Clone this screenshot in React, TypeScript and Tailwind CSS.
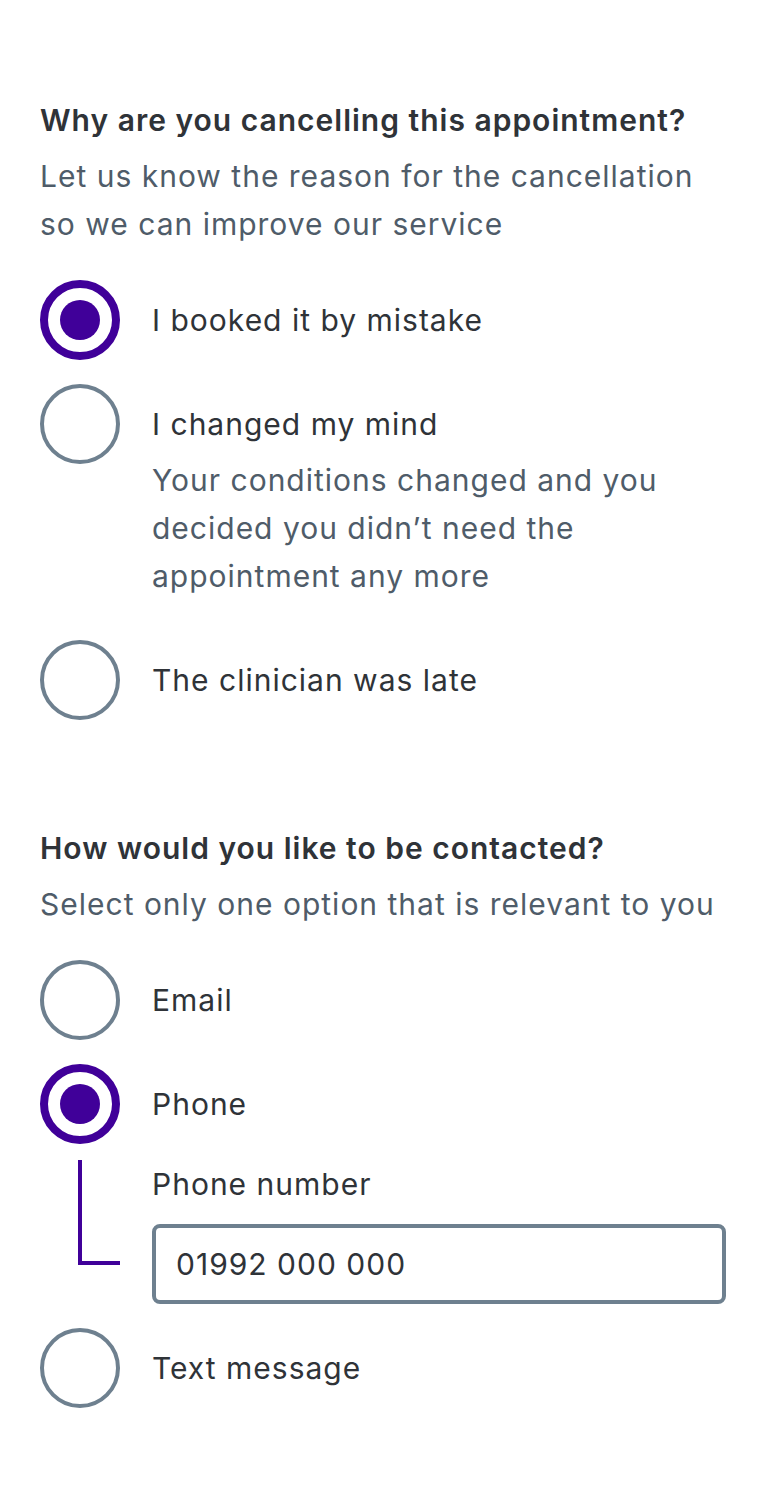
import { useState } from "react";

type Option = { value: string; label: string; hint?: string };

const reasons: Option[] = [
  { value: "mistake", label: "I booked it by mistake" },
  {
    value: "mind",
    label: "I changed my mind",
    hint: "Your conditions changed and you decided you didn\u2019t need the appointment any more",
  },
  { value: "late", label: "The clinician was late" },
];

const contacts: Option[] = [
  { value: "email", label: "Email" },
  { value: "phone", label: "Phone" },
  { value: "text", label: "Text message" },
];

function Radio({ checked }: { checked: boolean }) {
  return checked ? (
    <span className="w-20 h-20 shrink-0 rounded-full border-[8px] border-[#400099] flex items-center justify-center">
      <span className="w-10 h-10 rounded-full bg-[#400099]" />
    </span>
  ) : (
    <span className="w-20 h-20 shrink-0 rounded-full border-4 border-[#6e808f]" />
  );
}

function RadioItem({ option, checked, onSelect }: { option: Option; checked: boolean; onSelect: () => void }) {
  return (
    <button type="button" onClick={onSelect} className="flex gap-8 text-left tracking-[1px]">
      <Radio checked={checked} />
      <div className="pt-4 pb-4">
        <p className="text-[30px] leading-[48px] text-[#2f3338]">{option.label}</p>
        {option.hint && <p className="mt-2 text-[30px] leading-[48px] text-[#4f5c69]">{option.hint}</p>}
      </div>
    </button>
  );
}

export default function App() {
  const [reason, setReason] = useState("mistake");
  const [contact, setContact] = useState("phone");
  const [phone, setPhone] = useState("01992 000 000");

  return (
    <div className="min-h-screen bg-white px-10 pt-[100px] pb-20 tracking-[1px]" style={{ fontFamily: "Inter, 'Noto Sans', sans-serif" }}>
      {/* Reason */}
      <section>
        <h2 className="text-[30px] leading-[40px] font-semibold text-[#2f3338]">Why are you cancelling this appointment?</h2>
        <p className="mt-3 text-[30px] leading-[48px] text-[#4f5c69]">
          Let us know the reason for the cancellation so we can improve our service
        </p>
        <div className="mt-8 flex flex-col gap-6">
          {reasons.map(o => (
            <RadioItem key={o.value} option={o} checked={reason === o.value} onSelect={() => setReason(o.value)} />
          ))}
        </div>
      </section>

      {/* Contact */}
      <section className="mt-[108px]">
        <h2 className="text-[30px] leading-[40px] font-semibold text-[#2f3338]">How would you like to be contacted?</h2>
        <p className="mt-3 text-[30px] leading-[48px] text-[#4f5c69]">Select only one option that is relevant to you</p>
        <div className="mt-8 flex flex-col gap-6">
          {contacts.map(o => (
            <div key={o.value} className="flex flex-col">
              <RadioItem option={o} checked={contact === o.value} onSelect={() => setContact(o.value)} />
              {o.value === "phone" && contact === "phone" && (
                <div className="mt-4 flex gap-8">
                  <div className="w-20 shrink-0">
                    <div className="ml-[38px] w-[42px] h-[105px] border-l-4 border-b-4 border-[#400099]" />
                  </div>
                  <div className="flex-1">
                    <label htmlFor="phone" className="block text-[30px] leading-[48px] text-[#2f3338]">Phone number</label>
                    <input
                      id="phone"
                      value={phone}
                      onChange={e => setPhone(e.target.value)}
                      className="mt-4 w-full h-20 rounded-lg border-4 border-[#6e808f] px-5 text-[30px] tracking-[1px] text-[#2f3338] outline-none"
                    />
                  </div>
                </div>
              )}
            </div>
          ))}
        </div>
      </section>
    </div>
  );
}
